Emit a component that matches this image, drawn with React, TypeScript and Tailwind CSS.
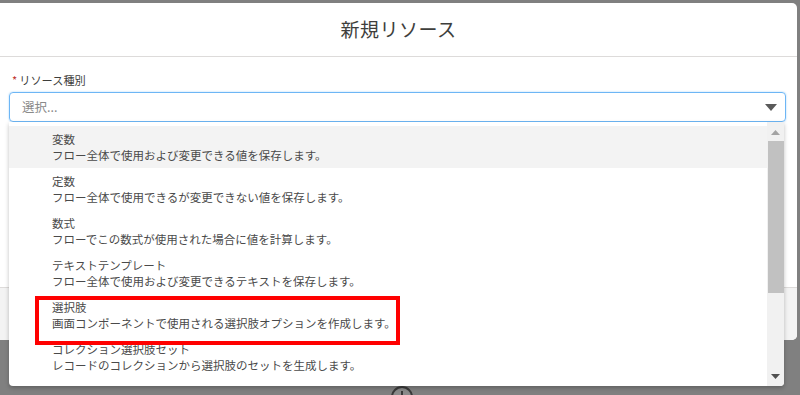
const font = { fontFamily: '"Noto Sans CJK JP", "Noto Sans", sans-serif' };

const items = [
  { title: "変数", desc: "フロー全体で使用および変更できる値を保存します。" },
  { title: "定数", desc: "フロー全体で使用できるが変更できない値を保存します。" },
  { title: "数式", desc: "フローでこの数式が使用された場合に値を計算します。" },
  { title: "テキストテンプレート", desc: "フロー全体で使用および変更できるテキストを保存します。" },
  { title: "選択肢", desc: "画面コンポーネントで使用される選択肢オプションを作成します。" },
  { title: "コレクション選択肢セット", desc: "レコードのコレクションから選択肢のセットを生成します。" },
];

export default function App() {
  return (
    <div className="relative w-[800px] h-[395px] overflow-hidden bg-[#808080] pt-[3px]" style={font}>
      {/* modal */}
      <div className="w-[797px] h-[337px] bg-white rounded-tr-[5px] rounded-br-[5px] flex flex-col overflow-hidden">
        <div className="h-[54px] border-b border-[#dddbda] flex items-center justify-center">
          <h2 className="text-[19px] text-[#3e3e3c] tracking-[0.5px]">新規リソース</h2>
        </div>
        <div className="flex-1 px-[9px] pt-[15px]">
          <label className="flex items-center text-[11.2px] text-[#3e3e3c] pl-[3px] h-[16px]">
            <span className="text-[#c23934] mr-[2px]">*</span>リソース種別
          </label>
          <div className="mt-[4px] h-[30px] w-[777px] border border-[#6db6f5] rounded-[4px] flex items-center justify-between pl-[12px] pr-[8px] shadow-[0_0_2px_#9fd0fa]">
            <span className="text-[12.5px] text-[#8a8a8a]">選択...</span>
            <svg width="12" height="7" viewBox="0 0 12 7">
              <path d="M0 0h12L6 7z" fill="#5a5a5a" />
            </svg>
          </div>
        </div>
        <div className="h-[53px] bg-[#f3f3f3] border-t border-[#dddbda]" />
      </div>

      {/* canvas button below */}
      <div className="absolute left-[391px] top-[386px] w-[22px] h-[22px] rounded-full border-2 border-[#3a3a3a] bg-[#8a8a8a] flex justify-center">
        <div className="w-[2px] h-[8px] bg-[#3a3a3a] mt-[3px]" />
      </div>

      {/* dropdown */}
      <div className="absolute left-[9px] top-[122px] w-[775px] h-[264px] bg-white rounded-b-[4px] shadow-[0_2px_4px_rgba(0,0,0,0.25)] flex overflow-hidden">
        <div className="flex-1 pt-[4px]">
          {items.map((it, i) => (
            <div
              key={it.title}
              className={`h-[42px] pl-[43px] flex flex-col justify-center text-[11.5px] leading-[16px] text-[#4a4a4a] ${i === 0 ? "bg-[#f3f3f3]" : ""}`}
            >
              <div>{it.title}</div>
              <div>{it.desc}</div>
            </div>
          ))}
        </div>
        <div className="w-[17px] bg-[#f1f1f1] flex flex-col items-center">
          <svg className="mt-[8px]" width="9" height="5" viewBox="0 0 9 5">
            <path d="M0 5h9L4.5 0z" fill="#a3a3a3" />
          </svg>
          <div className="mt-[6px] w-[16px] h-[152px] bg-[#c1c1c1]" />
          <div className="flex-1" />
          <svg className="mb-[7px]" width="9" height="5" viewBox="0 0 9 5">
            <path d="M0 0h9L4.5 5z" fill="#505050" />
          </svg>
        </div>
      </div>

      {/* highlight annotation */}
      <div className="absolute left-[35px] top-[296px] w-[365px] h-[49px] border-[4px] border-[#ff0000]" />
    </div>
  );
}
